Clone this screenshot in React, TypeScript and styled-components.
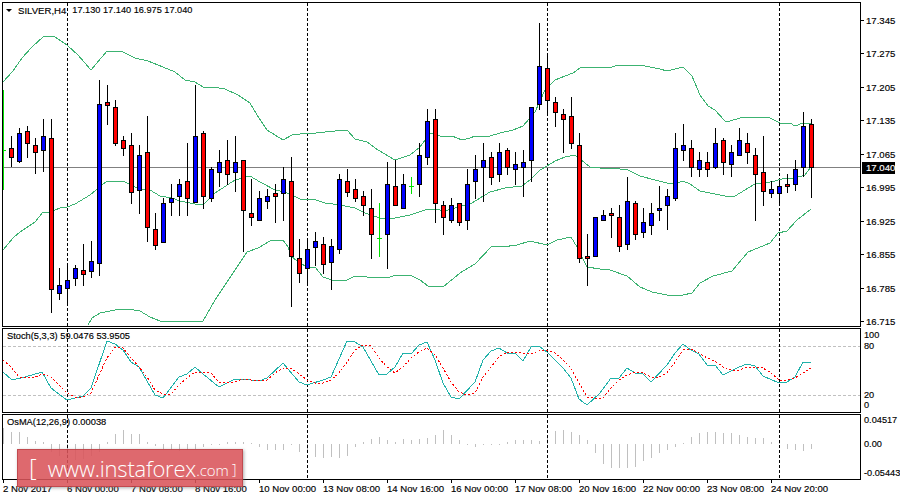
import React from 'react';
import styled, { createGlobalStyle } from 'styled-components';

type Candle = [number, 'b' | 'r' | 'g', number, number, number, number];

const candles: Candle[] = [
  [3, 'g', 90, 150, 150, 190],
  [11, 'r', 136, 148, 157, 167], [19, 'b', 128, 133, 161, 163], [27, 'r', 126, 131, 143, 158], [35, 'r', 138, 145, 152, 174],
  [43, 'b', 119, 136, 150, 172], [51, 'r', 119, 138, 289, 313], [59, 'b', 268, 285, 293, 300], [67, 'b', 265, 280, 288, 305],
  [75, 'b', 265, 268, 278, 286], [83, 'r', 244, 270, 274, 286], [91, 'b', 241, 261, 271, 278], [99, 'b', 80, 104, 263, 276],
  [107, 'r', 85, 102, 105, 125], [115, 'r', 100, 107, 143, 146], [123, 'r', 136, 140, 148, 156], [131, 'r', 133, 145, 192, 204],
  [139, 'b', 145, 155, 190, 214], [147, 'r', 116, 152, 227, 242], [155, 'r', 213, 229, 245, 250], [163, 'b', 198, 203, 242, 242],
  [171, 'b', 184, 198, 202, 216], [179, 'b', 179, 184, 196, 216], [187, 'r', 143, 181, 198, 216], [195, 'b', 85, 136, 202, 202],
  [203, 'r', 131, 133, 196, 209], [211, 'b', 167, 169, 198, 202], [219, 'b', 150, 162, 172, 187], [227, 'r', 140, 160, 174, 185],
  [235, 'b', 136, 162, 172, 192], [243, 'r', 160, 160, 210, 252], [251, 'r', 179, 213, 217, 226], [259, 'b', 191, 198, 220, 220],
  [267, 'b', 189, 196, 201, 209], [275, 'r', 184, 193, 196, 223], [283, 'b', 167, 179, 193, 221], [291, 'r', 157, 181, 256, 307],
  [299, 'r', 239, 258, 273, 283], [307, 'b', 241, 249, 268, 283], [315, 'b', 232, 241, 247, 266], [323, 'r', 237, 244, 264, 274],
  [331, 'b', 239, 246, 262, 290], [339, 'b', 174, 179, 249, 254], [347, 'r', 169, 181, 192, 197], [355, 'r', 179, 189, 198, 202],
  [363, 'r', 191, 196, 205, 216], [371, 'r', 189, 208, 234, 259], [379, 'g', 203, 238, 238, 257], [387, 'b', 162, 184, 234, 269],
  [395, 'r', 160, 186, 205, 205], [403, 'b', 174, 184, 208, 208], [411, 'g', 177, 186, 186, 194], [419, 'b', 143, 155, 184, 197],
  [427, 'b', 109, 121, 157, 165], [435, 'r', 109, 119, 203, 223], [443, 'r', 201, 205, 217, 235], [451, 'b', 198, 205, 220, 223],
  [459, 'r', 203, 203, 222, 226], [467, 'b', 169, 184, 220, 230], [475, 'b', 155, 169, 181, 199], [483, 'b', 143, 160, 167, 202],
  [491, 'r', 152, 157, 177, 185], [499, 'b', 143, 152, 174, 182], [507, 'r', 148, 150, 167, 175], [515, 'b', 152, 164, 169, 185],
  [523, 'b', 150, 162, 167, 197], [531, 'b', 107, 107, 160, 182], [539, 'b', 23, 66, 104, 110], [547, 'r', 56, 68, 100, 113],
  [555, 'r', 97, 102, 112, 127], [563, 'r', 109, 114, 119, 153], [571, 'r', 97, 116, 143, 149], [579, 'r', 133, 145, 258, 263],
  [587, 'r', 234, 256, 258, 286], [595, 'b', 217, 217, 256, 256], [603, 'b', 210, 215, 220, 220], [611, 'r', 208, 213, 215, 238],
  [619, 'r', 205, 217, 246, 252], [627, 'b', 177, 201, 244, 250], [635, 'r', 201, 203, 234, 240], [643, 'b', 208, 222, 232, 238],
  [651, 'b', 203, 213, 225, 235], [659, 'b', 186, 208, 210, 221], [667, 'b', 189, 196, 205, 230], [675, 'b', 133, 148, 198, 201],
  [683, 'b', 124, 145, 150, 161], [691, 'r', 140, 148, 167, 177], [699, 'b', 152, 160, 169, 177], [707, 'r', 152, 162, 169, 177],
  [715, 'b', 128, 143, 167, 169], [723, 'r', 138, 140, 162, 175], [731, 'b', 145, 152, 164, 177], [739, 'b', 128, 140, 155, 155],
  [747, 'r', 133, 143, 152, 164], [755, 'r', 148, 155, 174, 221], [763, 'r', 136, 172, 191, 206], [771, 'b', 181, 189, 193, 198],
  [779, 'b', 181, 186, 193, 203], [787, 'r', 174, 184, 186, 193], [795, 'b', 160, 169, 184, 191], [803, 'b', 112, 126, 167, 177],
  [811, 'r', 119, 124, 167, 198],
];

const upper = '3,82 13,71 22,58 32,47 43,37 48,36 55,37 67,45 78,55 91,70 107,51 123,52 135,58 148,61 163,67 175,72 185,80 195,82 203,87 212,87 225,89 238,95 250,103 257,115 267,130 283,140 292,135 300,134 316,133 335,131 347,130 355,139 367,142 378,150 395,160 410,155 420,147 430,133 440,136 452,136 462,140 470,138 475,136 490,136 500,133 513,130 523,126 535,112 545,90 555,80 565,76 573,73 580,68 590,67 600,67 612,67 618,65 640,65 650,67 660,69 667,71 675,69 683,67 692,76 700,95 708,106 715,110 725,121 730,121 740,118 750,117 770,118 780,123 790,123 795,126 803,123 811,124';
const middle = '3,250 13,238 20,232 35,222 43,212 50,212 60,208 67,207 75,204 90,195 96,190 107,181 123,181 131,185 139,189 150,190 160,196 172,198 180,201 195,204 204,204 215,193 235,180 250,176 260,182 275,190 285,192 300,199 316,200 325,203 340,205 355,208 365,213 380,218 395,218 410,215 425,210 435,209 445,211 465,205 472,203 480,198 490,192 505,188 522,186 530,180 540,170 547,166 555,161 565,157 575,155 585,163 590,167 600,168 612,168 620,169 628,170 640,176 655,180 667,183 675,184 683,181 690,184 700,191 710,193 725,196 735,196 745,190 755,184 765,183 775,181 785,178 795,178 805,175 811,167';
const lower = '88,325 92,318 100,313 115,310 127,309 140,311 150,317 160,321 170,322 185,321 203,321 215,300 225,285 235,270 247,252 258,248 270,241 283,240 288,247 292,257 300,263 307,267 315,267 323,277 332,280 347,280 355,276 367,277 388,278 395,275 412,276 420,280 428,286 443,287 460,273 475,264 492,246 502,247 517,245 530,241 547,245 557,240 571,237 577,247 587,267 600,269 610,270 627,276 640,287 652,292 667,295 683,295 692,293 700,283 713,276 732,271 748,252 770,243 778,233 787,231 797,220 811,209';

const stochMain = '3,372 12,380 25,377 42,372 51,388 67,400 83,396 91,388 107,341 115,344 123,350 131,362 139,367 155,395 163,398 179,377 187,374 195,367 203,374 219,387 235,379 251,380 259,381 267,378 283,363 299,382 307,385 323,380 331,377 347,341 355,342 363,347 379,375 387,374 395,367 403,353 411,354 419,345 427,342 435,360 443,383 451,397 459,399 475,382 483,360 491,351 499,348 507,353 515,353 523,361 531,347 539,346 547,352 563,368 571,378 579,399 587,405 600,393 611,378 619,378 627,368 635,373 643,374 651,382 667,365 675,353 683,344 691,350 699,354 707,365 715,365 723,375 739,367 747,364 755,366 763,376 779,383 787,382 795,377 803,362 811,363';
const stochSignal = '3,360 11,367 19,377 27,377 35,377 43,374 51,377 59,385 67,393 75,397 83,397 91,393 99,375 107,358 115,347 123,348 131,358 139,367 147,377 155,390 163,394 171,394 179,385 187,378 195,372 203,372 211,373 219,382 227,383 235,382 243,379 251,380 259,380 267,380 275,373 283,368 291,368 299,374 307,380 315,383 323,383 331,380 339,373 347,362 355,350 363,345 371,346 379,358 387,367 395,373 403,367 411,358 419,352 427,348 435,355 443,368 451,382 459,392 467,395 475,393 483,377 491,367 499,357 507,352 515,352 523,353 531,354 539,351 547,350 555,353 563,360 571,368 579,383 587,397 595,398 603,398 611,388 619,380 627,375 635,372 643,373 651,377 659,377 667,373 675,362 683,350 691,349 699,353 707,358 715,361 723,367 731,370 739,370 747,367 755,367 763,368 771,373 779,380 787,380 795,378 803,373 811,368';

const osma = [16, 12, 12, 7, 3, 2, -8, -12, -14, -16, -15, -12, -8, 2, 10, 14, 10, 10, 2, -2, -5, -6, -7, -6, -5, -3, -1, -1, 2, 2, 2, 1, -3, -6, -6, -6, -1, -8, -9, -13, -14, -13, -14, -12, -3, 2, 5, 7, 4, 2, 5, 4, 5, 6, 9, 14, 9, 4, -1, -3, -1, -1, -1, 2, 4, 4, 4, 3, 7, 13, 14, 12, 9, 4, -9, -20, -24, -24, -24, -23, -17, -14, -9, -6, -3, 1, 7, 11, 12, 12, 11, 11, 9, 7, 6, 6, 2, 1, -5, -6, -7, -5];

const separators = [67, 307, 547, 779];
const prices = ['17.345', '17.275', '17.205', '17.135', '17.065', '16.995', '16.925', '16.855', '16.785', '16.715'];
const times = ['2 Nov 2017', '6 Nov 00:00', '7 Nov 08:00', '8 Nov 16:00', '10 Nov 00:00', '13 Nov 08:00', '14 Nov 16:00', '16 Nov 00:00', '17 Nov 08:00', '20 Nov 16:00', '22 Nov 00:00', '23 Nov 08:00', '24 Nov 20:00'];

const Global = createGlobalStyle`
  html, body { margin: 0; padding: 0; background: #fff; }
  body { width: 900px; height: 500px; overflow: hidden; font-family: "Liberation Sans", Arial, sans-serif; }
`;

const Terminal = styled.main`
  width: 900px;
  height: 500px;
  padding: 2px 0 0 2px;
  box-sizing: border-box;
  display: flex;
  flex-direction: column;
  position: relative;
  background: #fff;
  color: #000;
  font: 9.6px "Liberation Sans", Arial, sans-serif;
  -webkit-text-stroke: 0.15px #000;
`;

const Pane = styled.section<{ $height: number; $gap?: number }>`
  display: flex;
  height: ${(p) => p.$height}px;
  margin-bottom: ${(p) => p.$gap ?? 0}px;
  flex: none;
`;

const Plot = styled.div`
  width: 859px;
  box-sizing: border-box;
  border: 1px solid #000;
  position: relative;
  flex: none;
`;

const PlotSvg = styled.svg`
  display: block;
  width: 857px;
  height: 100%;
  shape-rendering: crispEdges;
`;

const Caption = styled.div`
  position: absolute;
  left: 4px;
  top: 2px;
  font-size: 9.3px;
  line-height: 11px;
  white-space: nowrap;
`;

const MainCaption = styled.div`
  position: absolute;
  left: 3px;
  top: 2px;
  display: flex;
  align-items: center;
  gap: 6px;
  line-height: 11px;
  white-space: pre;
`;

const Symbol = styled.span`
  display: flex;
  align-items: center;
  gap: 6px;
`;

const Quote = styled.span`
  font-size: 9.2px;
`;

const Arrow = styled.span`
  width: 0;
  height: 0;
  border-left: 3.5px solid transparent;
  border-right: 3.5px solid transparent;
  border-top: 3.5px solid #000;
`;

const Axis = styled.div`
  width: 39px;
  flex: none;
  position: relative;
`;

const PriceTicks = styled.ul`
  margin: 0;
  padding: 13px 0 0 0;
  list-style: none;
  display: flex;
  flex-direction: column;
  gap: 22.45px;
`;

const PriceTick = styled.li`
  height: 11px;
  line-height: 11px;
  padding-left: 5px;
  position: relative;
  &::before {
    content: '';
    position: absolute;
    left: 0;
    top: 5px;
    width: 3px;
    height: 1px;
    background: #000;
  }
`;

const LastPrice = styled.div`
  position: absolute;
  left: 1px;
  top: 160px;
  width: 33px;
  height: 12px;
  line-height: 12px;
  padding-left: 4px;
  box-sizing: border-box;
  background: #000;
  color: #fff;
  -webkit-text-stroke: 0.15px #fff;
`;

const SubTicks = styled.ul<{ $top: number }>`
  margin: 0;
  padding: ${(p) => p.$top}px 0 0 3px;
  list-style: none;
  font-size: 9.2px;
  white-space: nowrap;
`;

const SubTick = styled.li<{ $offset: number }>`
  height: 11px;
  line-height: 11px;
  margin-top: ${(p) => p.$offset}px;
`;

const TimeAxis = styled.ol`
  margin: 0;
  padding: 0;
  list-style: none;
  display: flex;
  width: 859px;
`;

const TimeTick = styled.li`
  width: 64px;
  flex: none;
  height: 15px;
  padding: 3px 0 0 1px;
  box-sizing: border-box;
  line-height: 11px;
  white-space: nowrap;
  position: relative;
  &::before {
    content: '';
    position: absolute;
    left: 1px;
    top: 0;
    width: 1px;
    height: 3px;
    background: #000;
  }
`;

const Watermark = styled.div`
  position: absolute;
  left: 17px;
  top: 449px;
  width: 226px;
  height: 38px;
  box-sizing: border-box;
  background: rgba(218, 84, 90, 0.88);
  border: 1px solid rgba(170, 50, 55, 0.55);
  box-shadow: 1px 1px 3px rgba(120, 120, 120, 0.6);
  color: #fff;
  -webkit-text-stroke: 0;
  display: flex;
  align-items: center;
  padding-left: 11px;
  font: 300 22px "Open Sans", "Liberation Sans", sans-serif;
  white-space: nowrap;
`;

const Bracket = styled.span`
  font-size: 24px;
  margin-top: -4px;
`;

const Site = styled.span`
  margin-left: 11px;
  letter-spacing: -0.2px;
`;

const Tld = styled.span`
  font-size: 15px;
  margin-top: 3px;
`;

const CloseBracket = styled(Bracket)`
  font-size: 14px;
  margin: 3px 0 0 3px;
`;

const CandleMark: React.FC<{ c: Candle }> = ({ c }) => {
  const [x, kind, high, top, bottom, low] = c;
  if (kind === 'g') {
    return (
      <g stroke="#00e000">
        <line x1={x + 0.5} x2={x + 0.5} y1={high} y2={low} />
        <line x1={x - 2} x2={x + 3} y1={top + 0.5} y2={top + 0.5} />
      </g>
    );
  }
  return (
    <g>
      <line x1={x + 0.5} x2={x + 0.5} y1={high} y2={low} stroke="#000" />
      <rect x={x - 1.5} y={top + 0.5} width={4} height={Math.max(bottom - top, 1)} fill={kind === 'b' ? '#0000ff' : '#ff0000'} stroke="#000" />
    </g>
  );
};

const Separators: React.FC<{ from: number; to: number }> = ({ from, to }) => (
  <>
    {separators.map((x) => (
      <line key={x} x1={x + 0.5} x2={x + 0.5} y1={from} y2={to} stroke="#000" strokeDasharray="3 2" />
    ))}
  </>
);

const App: React.FC = () => (
  <>
    <Global />
    <Terminal>
      <Pane $height={325} $gap={1}>
        <Plot>
          <PlotSvg viewBox="3 3 857 323" preserveAspectRatio="none">
            <line x1={3} x2={860} y1={167.5} y2={167.5} stroke="#808080" />
            <Separators from={3} to={326} />
            <polyline points={upper} fill="none" stroke="#3cb371" />
            <polyline points={middle} fill="none" stroke="#3cb371" />
            <polyline points={lower} fill="none" stroke="#3cb371" />
            {candles.map((c) => <CandleMark key={c[0]} c={c} />)}
          </PlotSvg>
          <MainCaption>
            <Symbol>
              <Arrow />
              <span>SILVER,H4</span>
            </Symbol>
            <Quote>17.130 17.140 16.975 17.040</Quote>
          </MainCaption>
        </Plot>
        <Axis>
          <PriceTicks>
            {prices.map((p) => <PriceTick key={p}>{p}</PriceTick>)}
          </PriceTicks>
          <LastPrice>17.040</LastPrice>
        </Axis>
      </Pane>
      <Pane $height={85} $gap={1}>
        <Plot>
          <PlotSvg viewBox="3 329 857 83" preserveAspectRatio="none">
            <line x1={3} x2={860} y1={346.5} y2={346.5} stroke="#c0c0c0" strokeDasharray="3 2" />
            <line x1={3} x2={860} y1={395.5} y2={395.5} stroke="#c0c0c0" strokeDasharray="3 2" />
            <Separators from={329} to={412} />
            <polyline points={stochMain} fill="none" stroke="#20b2aa" />
            <polyline points={stochSignal} fill="none" stroke="#ff0000" strokeDasharray="2 2" />
          </PlotSvg>
          <Caption>Stoch(5,3,3) 59.0476 53.9505</Caption>
        </Plot>
        <Axis>
          <SubTicks $top={2}>
            <SubTick $offset={0}>100</SubTick>
            <SubTick $offset={0}>80</SubTick>
            <SubTick $offset={38}>20</SubTick>
            <SubTick $offset={-1}>0</SubTick>
          </SubTicks>
        </Axis>
      </Pane>
      <Pane $height={66}>
        <Plot>
          <PlotSvg viewBox="3 415 857 64" preserveAspectRatio="none">
            {osma.map((v, i) => {
              const x = 3.5 + 8 * i;
              return <line key={x} x1={x} x2={x} y1={444} y2={444 - v} stroke="#c0c0c0" />;
            })}
            <Separators from={415} to={479} />
          </PlotSvg>
          <Caption>OsMA(12,26,9) 0.00038</Caption>
        </Plot>
        <Axis>
          <SubTicks $top={1}>
            <SubTick $offset={0}>0.04517</SubTick>
            <SubTick $offset={13}>0.00</SubTick>
            <SubTick $offset={18}>-0.05443</SubTick>
          </SubTicks>
        </Axis>
      </Pane>
      <TimeAxis>
        {times.map((t) => <TimeTick key={t}>{t}</TimeTick>)}
      </TimeAxis>
      <Watermark>
        <Bracket>[</Bracket>
        <Site>www.instaforex</Site>
        <Tld>.com</Tld>
        <CloseBracket>]</CloseBracket>
      </Watermark>
    </Terminal>
  </>
);

export default App;
